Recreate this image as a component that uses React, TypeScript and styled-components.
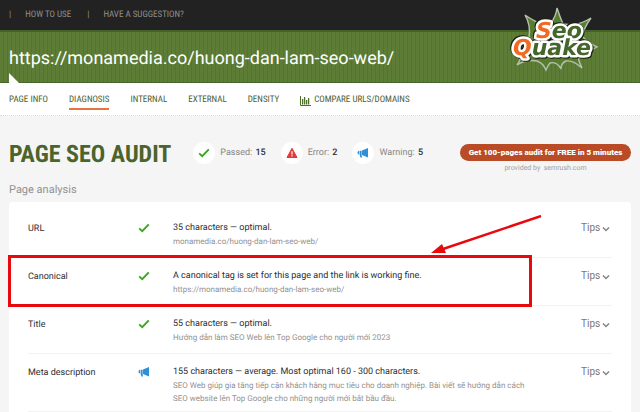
import React from 'react';
import styled, { createGlobalStyle } from 'styled-components';

const condensed = '"Roboto Condensed", "Liberation Sans Narrow", Roboto, sans-serif';

const GlobalStyle = createGlobalStyle`
  * { box-sizing: border-box; }
  body {
    margin: 0;
    background: #f5f5f5;
    color: #2b2e33;
    font-family: Roboto, "Open Sans", sans-serif;
    font-size: 9px;
    text-rendering: geometricPrecision;
  }
  h1, h2, p, ul { margin: 0; padding: 0; }
  a { color: inherit; text-decoration: none; }
`;

const Page = styled.div`
  min-height: 100vh;
  display: flex;
  flex-direction: column;
`;

const Header = styled.header`
  position: relative;
`;

const TopBar = styled.nav`
  height: 30px;
  padding: 0 9px;
  display: flex;
  align-items: center;
  background: #222;
  color: #8f8f8f;
  font-family: ${condensed};
  font-size: 9px;
`;

const TopItem = styled.a`
  display: flex;
  gap: 14px;
  margin-right: 16px;
  &::before { content: '|'; }
`;

const Banner = styled.div`
  height: 53px;
  padding: 3px 9px 0;
  display: flex;
  align-items: center;
  color: #fff;
  font-size: 18px;
  border-top: 2px solid #46602a;
  border-bottom: 1px solid #46682a;
  background: repeating-linear-gradient(90deg, #5d7d37 0 3px, #55752f 3px 4px);
`;

const Notch = styled.span`
  position: absolute;
  left: 9px;
  bottom: 0;
  border-left: 10px solid #fff;
  border-top: 10px solid transparent;
`;

const LogoMark = styled.svg`
  position: absolute;
  right: 40px;
  top: 5px;
  width: 96px;
  height: 70px;
  overflow: visible;
  font-family: "DejaVu Sans", sans-serif;
  font-weight: bold;
  font-style: oblique;
  font-size: 22px;
`;

const Lettering = styled.g`
  fill: #44662a;
  stroke: #fff;
  stroke-width: 5px;
  stroke-linejoin: round;
  paint-order: stroke;
  filter: drop-shadow(1px 1px 0 #17200f) drop-shadow(-1px -1px 0 #17200f);
  .initial { fill: #f26a21; }
`;

const Tabs = styled.nav`
  height: 33px;
  padding: 3px 9px 0;
  display: flex;
  align-items: center;
  gap: 21px;
  background: #fff;
  border-bottom: 1px dotted #ddd;
  color: #4c6130;
  font-family: ${condensed};
  font-size: 9px;
`;

const Tab = styled.a<{ $active?: boolean }>`
  display: flex;
  align-items: center;
  gap: 3px;
  line-height: 15px;
  border-top: 2px solid transparent;
  border-bottom: 2px solid ${p => (p.$active ? '#e8743b' : 'transparent')};
`;

const Main = styled.main`
  flex: 1;
  display: flex;
  flex-direction: column;
  padding: 0 9px;
`;

const Summary = styled.section`
  height: 64px;
  padding-top: 22px;
  display: flex;
  align-items: flex-start;
`;

const Title = styled.h1`
  margin-right: 22px;
  line-height: 32px;
  color: #4b642b;
  font-family: ${condensed};
  font-size: 24px;
  font-weight: 700;
`;

const Stats = styled.ul`
  display: flex;
  align-items: center;
  gap: 15px;
  height: 30px;
  list-style: none;
`;

const Stat = styled.li`
  display: flex;
  align-items: center;
  gap: 5px;
  color: #858585;
  b { color: #2b2e33; font-weight: 500; margin-left: 1px; }
`;

const Disc = styled.span`
  width: 22px;
  height: 22px;
  border-radius: 50%;
  display: grid;
  place-items: center;
  background: #fff;
`;

const Promo = styled.div`
  margin-left: auto;
  padding-top: 6px;
  width: 171px;
  text-align: center;
  color: #a0a0a0;
  font-size: 7px;
  line-height: 14px;
`;

const PromoButton = styled.button`
  display: block;
  width: 100%;
  height: 17px;
  padding: 0;
  border: 0;
  border-radius: 9px;
  background: #b94b27;
  color: #fff;
  font-family: Roboto, sans-serif;
  font-size: 8px;
  font-weight: 900;
`;

const Subtitle = styled.h2`
  height: 22px;
  line-height: 20px;
  color: #929292;
  font-size: 11px;
  font-weight: 400;
`;

const Card = styled.section`
  flex: 1;
  padding: 8px 19px 0;
  background: #fff;
  border-radius: 3px 3px 0 0;
`;

const Row = styled.article`
  position: relative;
  min-height: 48px;
  padding: 11px 0 6px;
  display: grid;
  grid-template-columns: 110px 35px minmax(0, 1fr) 31px;
  align-items: start;
  border-bottom: 1px solid #f2f2f2;
  line-height: 14px;
`;

const IconCell = styled.span`
  display: flex;
  height: 14px;
  align-items: center;
`;

const Name = styled.span`
  line-height: 16px;
`;

const Detail = styled.p`
  max-width: 368px;
  color: #929292;
  font-size: 8px;
  line-height: 13px;
`;

const Tips = styled.button`
  display: flex;
  align-items: center;
  gap: 2px;
  padding: 0;
  border: 0;
  background: none;
  color: #777;
  font: 10px/14px Roboto, sans-serif;
`;

const Highlight = styled.div`
  position: absolute;
  inset: -3px 80px -2px -20px;
  border: 3px solid #e8090c;
`;

const Arrow = styled.svg`
  position: absolute;
  right: 70px;
  top: -43px;
  width: 112px;
  height: 42px;
`;

const Check = () => (
  <svg width="12" height="12" viewBox="0 0 12 12" fill="none" stroke="#36a51c" strokeWidth="1.8" aria-hidden="true">
    <path d="M1.2 6.4 4.2 9.2 10.8 2.4" />
  </svg>
);

const Alert = () => (
  <svg width="12" height="12" viewBox="0 0 12 12" aria-hidden="true">
    <path d="M6 1.3 11 10.5H1Z" fill="#e23a38" stroke="#e23a38" strokeLinejoin="round" />
    <path d="M6 4.2v3.3M6 8.3v1.3" stroke="#fff" strokeWidth="1.2" />
  </svg>
);

const Megaphone = () => (
  <svg width="12" height="12" viewBox="0 0 12 12" fill="#2f8fd9" aria-hidden="true">
    <path d="M11 1V10.6L5 8V3.6ZM4.6 3.7V7.8L5 10.6H3.4L2.6 7.6V3.7ZM2 3.7V7.5C.1 7.3.1 3.9 2 3.7Z" />
  </svg>
);

const Chevron = () => (
  <svg width="8" height="8" viewBox="0 0 8 8" fill="none" stroke="#858585" strokeWidth="1.5" aria-hidden="true">
    <path d="m1 3.5 3 3 3-3" />
  </svg>
);

const Bars = () => (
  <svg width="11" height="10" viewBox="0 0 11 10" fill="none" stroke="#4f7029" aria-hidden="true">
    <path d="M.5 0v9.5H11" />
    <path d="M2.6 3v5.5M4.6 1v7.5M6.6 4v4.5M8.6 2v6.5" strokeWidth="1.3" />
  </svg>
);

const Logo = () => (
  <LogoMark viewBox="504 5 96 70" role="img" aria-label="SeoQuake">
    <path
      d="M529 38Q531 25 525 15Q532 20 543 25L550 24Q556 17 557 8Q560 17 563 24L573 25Q583 23 591 18Q585 26 582 36Q588 43 597 47Q588 52 578 57Q579 62 582 68Q573 60 566 61Q561 63 561 69Q557 61 550 63Q548 65 546 70Q543 63 537 61Q526 59 517 65Q521 60 520 55Z"
      fill="#587d31"
      stroke="#b5c0ad"
      strokeWidth="1.4"
    />
    <Lettering>
      <text x="536" y="38"><tspan className="initial">S</tspan>eo</text>
      <text x="513" y="55"><tspan className="initial">Q</tspan>uake</text>
    </Lettering>
  </LogoMark>
);

type Status = 'ok' | 'warning';

const checks: { name: string; status: Status; result: string; detail: string; marked?: boolean }[] = [
  { name: 'URL', status: 'ok', result: '35 characters — optimal.', detail: 'monamedia.co/huong-dan-lam-seo-web/' },
  {
    name: 'Canonical',
    status: 'ok',
    result: 'A canonical tag is set for this page and the link is working fine.',
    detail: 'https://monamedia.co/huong-dan-lam-seo-web/',
    marked: true,
  },
  {
    name: 'Title',
    status: 'ok',
    result: '55 characters — optimal.',
    detail: 'Hướng dẫn làm SEO Web lên Top Google cho người mới 2023',
  },
  {
    name: 'Meta description',
    status: 'warning',
    result: '155 characters — average. Most optimal 160 - 300 characters.',
    detail:
      'SEO Web giúp gia tăng tiếp cận khách hàng mục tiêu cho doanh nghiệp. Bài viết sẽ hướng dẫn cách SEO website lên Top Google cho những người mới bắt bầu đầu.',
  },
];

export default function App() {
  return (
    <Page>
      <GlobalStyle />
      <Header>
        <TopBar>
          <TopItem href="#how">HOW TO USE</TopItem>
          <TopItem href="#suggestion">HAVE A SUGGESTION?</TopItem>
        </TopBar>
        <Banner>https://monamedia.co/huong-dan-lam-seo-web/</Banner>
        <Notch />
        <Logo />
      </Header>
      <Tabs>
        <Tab href="#info">PAGE INFO</Tab>
        <Tab href="#diagnosis" $active>DIAGNOSIS</Tab>
        <Tab href="#internal">INTERNAL</Tab>
        <Tab href="#external">EXTERNAL</Tab>
        <Tab href="#density">DENSITY</Tab>
        <Tab href="#compare"><Bars />COMPARE URLS/DOMAINS</Tab>
      </Tabs>
      <Main>
        <Summary>
          <Title>PAGE SEO AUDIT</Title>
          <Stats>
            <Stat><Disc><Check /></Disc><span>Passed: <b>15</b></span></Stat>
            <Stat><Disc><Alert /></Disc><span>Error: <b>2</b></span></Stat>
            <Stat><Disc><Megaphone /></Disc><span>Warning: <b>5</b></span></Stat>
          </Stats>
          <Promo>
            <PromoButton>Get 100-pages audit for FREE in 5 minutes</PromoButton>
            provided by&nbsp; <a href="#semrush">semrush.com</a>
          </Promo>
        </Summary>
        <Subtitle>Page analysis</Subtitle>
        <Card>
          {checks.map(c => (
            <Row key={c.name}>
              <Name>{c.name}</Name>
              <IconCell>{c.status === 'ok' ? <Check /> : <Megaphone />}</IconCell>
              <div>
                {c.result}
                <Detail>{c.detail}</Detail>
              </div>
              <Tips>Tips <Chevron /></Tips>
              {c.marked && (
                <>
                  <Highlight />
                  <Arrow viewBox="0 0 112 42" aria-hidden="true">
                    <path d="M111 1 10 35" stroke="#e8090c" strokeWidth="2.4" />
                    <path d="M1 38 12 29 16 38Z" fill="#e8090c" />
                  </Arrow>
                </>
              )}
            </Row>
          ))}
        </Card>
      </Main>
    </Page>
  );
}
